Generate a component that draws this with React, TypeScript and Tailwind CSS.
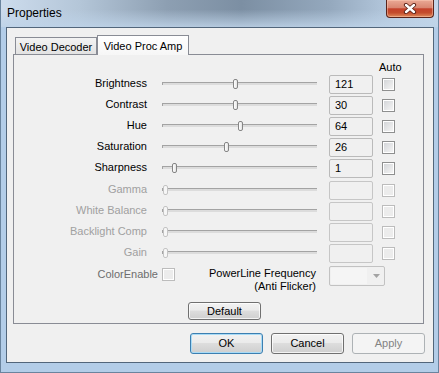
import type { ReactNode } from "react";

// ---------------------------------------------------------------------------
// Data
// ---------------------------------------------------------------------------

const ROWS = [
  { label: "Brightness", value: "121", pos: 71, enabled: true },
  { label: "Contrast", value: "30", pos: 71, enabled: true },
  { label: "Hue", value: "64", pos: 76, enabled: true },
  { label: "Saturation", value: "26", pos: 62, enabled: true },
  { label: "Sharpness", value: "1", pos: 10, enabled: true },
  { label: "Gamma", value: "", pos: 1, enabled: false },
  { label: "White Balance", value: "", pos: 1, enabled: false },
  { label: "Backlight Comp", value: "", pos: 1, enabled: false },
  { label: "Gain", value: "", pos: 1, enabled: false },
];

const FONT = "font-['Liberation_Sans',Arial,sans-serif]";

const BTN_FACE =
  "bg-[linear-gradient(180deg,#f2f2f2_0%,#ebebeb_45%,#dddddd_50%,#cfcfcf_100%)]";

// ---------------------------------------------------------------------------
// Small controls
// ---------------------------------------------------------------------------

function CheckBox({ enabled = true }: { enabled?: boolean }) {
  return (
    <div
      className={
        enabled
          ? "h-[13px] w-[13px] border border-[#8e8f8f] bg-white p-px"
          : "h-[13px] w-[13px] border border-[#bcbcbc] bg-white p-px"
      }
    >
      <div
        className={
          enabled
            ? "h-full w-full bg-[linear-gradient(135deg,#d4d6d9_0%,#f4f4f4_100%)]"
            : "h-full w-full bg-[#ececec]"
        }
      />
    </div>
  );
}

function Slider({ pos, enabled }: { pos: number; enabled: boolean }) {
  return (
    <div className="relative ml-[15px] flex h-[21px] w-[155px] items-center">
      <div className="mb-[2px] h-[3px] w-full border-t border-l border-[#a3a3a3] border-r-white border-b-white bg-[#dcdcdc]" />
      <div
        className={
          enabled
            ? "absolute top-[5px] h-[10px] w-[5px] rounded-[2px] border border-[#858585] bg-[linear-gradient(90deg,#ffffff,#e4e4e4)]"
            : "absolute top-[5px] h-[10px] w-[5px] rounded-[2px] border border-[#c4c4c4] bg-[#f6f6f6]"
        }
        style={{ left: pos }}
      />
    </div>
  );
}

function Button({
  children,
  kind = "normal",
  className = "",
}: {
  children: ReactNode;
  kind?: "normal" | "default" | "disabled";
  className?: string;
}) {
  const look =
    kind === "default"
      ? `border-[#3c7fb1] ${BTN_FACE} shadow-[inset_0_0_0_1px_#a9dbf6] text-black`
      : kind === "disabled"
        ? "border-[#adb2b5] bg-[#f4f4f4] text-[#838383]"
        : `border-[#707070] ${BTN_FACE} shadow-[inset_0_0_0_1px_rgba(255,255,255,0.75)] text-black`;
  return (
    <div
      className={`flex w-[73px] items-center justify-center rounded-[3px] border text-[11px] ${look} ${className}`}
    >
      {children}
    </div>
  );
}

// ---------------------------------------------------------------------------
// Properties dialog
// ---------------------------------------------------------------------------

export default function App() {
  return (
    <div
      className={`flex h-[373px] w-[439px] flex-col border-x border-b border-[#6a849e] bg-[#b3cde8] ${FONT}`}
    >
      {/* Title bar */}
      <div className="flex h-[27px] items-start bg-[linear-gradient(180deg,rgba(200,218,236,0)_35%,rgba(190,211,232,0.85)_100%),linear-gradient(90deg,#cddced_0%,#b4c6d8_18%,#8d9fb2_38%,#7c8fa3_55%,#94a8bd_75%,#b6cadf_90%,#c4d6e9_100%)]">
        <span className="ml-[6px] mt-[5px] text-[12px] leading-[16px] text-black">
          Properties
        </span>
        <div className="ml-auto mr-[4px] flex h-[18px] w-[48px] items-center justify-center rounded-b-[4px] border border-t-0 border-[#5a241a] bg-[linear-gradient(180deg,#eaa995_0%,#d98671_45%,#c4412a_52%,#c44c2c_75%,#df8b5b_100%)] shadow-[inset_0_0_0_1px_rgba(255,210,190,0.45)]">
          <svg width="14" height="11" viewBox="0 0 14 11">
            <path
              d="M3 2 L11 9 M11 2 L3 9"
              stroke="#5a2016"
              strokeWidth="4.2"
              strokeLinecap="round"
            />
            <path
              d="M3 2 L11 9 M11 2 L3 9"
              stroke="#ffffff"
              strokeWidth="2.4"
              strokeLinecap="round"
            />
          </svg>
        </div>
      </div>

      {/* Client area */}
      <div className="ml-[5px] mr-[4px] flex h-[336px] flex-col border border-[#52667b] bg-[#f0f0f0] pt-[7px] text-[11px] text-black">
        {/* Tabs */}
        <div className="ml-[6px] flex items-end pl-[2px]">
          <div className="flex h-[17px] w-[82px] items-center justify-center border-x border-t border-[#898c95] bg-[linear-gradient(180deg,#f3f3f3,#e2e2e2)] pt-[3px]">
            Video Decoder
          </div>
          <div className="relative z-10 -mb-px flex h-[20px] w-[92px] items-start justify-center border-x border-t border-[#898c95] bg-[linear-gradient(180deg,#ffffff,#f6f6f6)] pt-[2px]">
            Video Proc Amp
          </div>
        </div>

        {/* Tab page */}
        <div className="ml-[6px] flex h-[270px] w-[411px] flex-col border border-[#898c95] pt-[5px]">
          <div className="h-[14px] pl-[365px] leading-[14px]">Auto</div>

          {ROWS.map((row, i) => (
            <div
              key={row.label}
              className={`flex h-[21px] items-center ${i === 5 ? "mt-px" : ""}`}
            >
              <div
                className={`mb-[2px] w-[133px] text-right ${
                  row.enabled ? "text-black" : "text-[#a0a0a0]"
                }`}
              >
                {row.label}
              </div>
              <Slider pos={row.pos} enabled={row.enabled} />
              <div
                className={`ml-[12px] flex h-[19px] w-[44px] items-center rounded-[2px] border pl-[5px] ${
                  row.enabled ? "border-[#bababa]" : "border-[#c6c6c6]"
                }`}
              >
                {row.value}
              </div>
              <div className="ml-[9px]">
                <CheckBox enabled={row.enabled} />
              </div>
            </div>
          ))}

          {/* ColorEnable / PowerLine row */}
          <div className="mt-[2px] flex items-start">
            <div className="mt-[2px] w-[144px] text-right leading-[13px] text-[#6d6d6d]">
              ColorEnable
            </div>
            <div className="ml-[4px] mt-[2px]">
              <CheckBox enabled={false} />
            </div>
            <div className="mt-px flex w-[141px] flex-col text-right leading-[13px]">
              <span>PowerLine Frequency</span>
              <span>(Anti Flicker)</span>
            </div>
            <div className="ml-[13px] flex h-[20px] w-[56px] rounded-[2px] border border-[#c2c2c2] bg-[#f0f0f0]">
              <div className="m-px flex-1 bg-[#f5f5f5]" />
              <div className="flex w-[16px] items-center justify-center">
                <svg width="7" height="4" viewBox="0 0 7 4">
                  <path d="M0 0 H7 L3.5 4 Z" fill="#a3a3a3" />
                </svg>
              </div>
            </div>
          </div>

          <Button className="ml-[174px] mt-[9px] h-[18px]">Default</Button>
        </div>

        {/* Dialog buttons */}
        <div className="mt-[9px] flex justify-end gap-[8px] pr-[8px]">
          <Button kind="default" className="h-[21px]">
            OK
          </Button>
          <Button className="h-[21px]">Cancel</Button>
          <Button kind="disabled" className="h-[21px]">
            Apply
          </Button>
        </div>
      </div>
    </div>
  );
}
